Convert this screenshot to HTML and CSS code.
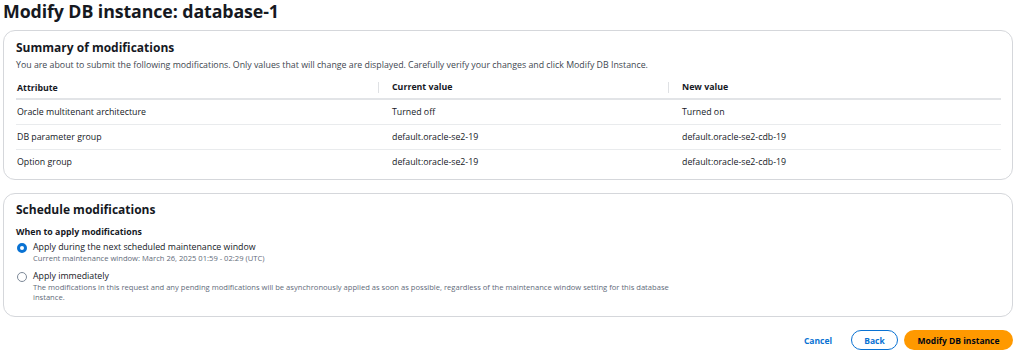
FILE: index.html
```html
<!DOCTYPE html>
<html lang="en">
<head>
    <meta charset="UTF-8">
    <meta name="viewport" content="width=device-width, initial-scale=1.0">
    <title>Modify DB instance</title>
    <link rel="stylesheet" href="styles.css">
</head>
<body>
    <div class="page">
        <h1>Modify DB instance: database-1</h1>

        <div class="card">
            <h2>Summary of modifications</h2>
            <p class="desc">You are about to submit the following modifications. Only values that will change are displayed. Carefully verify your changes and click Modify DB Instance.</p>

            <table class="summary">
                <thead>
                    <tr>
                        <th class="col-attr">Attribute</th>
                        <th class="col-cur"><span>Current value</span></th>
                        <th class="col-new"><span>New value</span></th>
                    </tr>
                </thead>
                <tbody>
                    <tr>
                        <td>Oracle multitenant architecture</td>
                        <td>Turned off</td>
                        <td>Turned on</td>
                    </tr>
                    <tr>
                        <td>DB parameter group</td>
                        <td>default.oracle-se2-19</td>
                        <td>default.oracle-se2-cdb-19</td>
                    </tr>
                    <tr>
                        <td>Option group</td>
                        <td>default:oracle-se2-19</td>
                        <td>default:oracle-se2-cdb-19</td>
                    </tr>
                </tbody>
            </table>
        </div>

        <div class="card schedule">
            <h2>Schedule modifications</h2>
            <div class="field-label">When to apply modifications</div>

            <div class="radio-item">
                <span class="radio checked"></span>
                <div class="radio-text">
                    <div class="radio-label">Apply during the next scheduled maintenance window</div>
                    <div class="radio-desc">Current maintenance window: March 26, 2025 01:59 - 02:29 (UTC)</div>
                </div>
            </div>

            <div class="radio-item">
                <span class="radio"></span>
                <div class="radio-text">
                    <div class="radio-label">Apply immediately</div>
                    <div class="radio-desc">The modifications in this request and any pending modifications will be asynchronously applied as soon as possible, regardless of the maintenance window setting for this database instance.</div>
                </div>
            </div>
        </div>

        <div class="actions">
            <button class="btn-link">Cancel</button>
            <button class="btn-normal">Back</button>
            <button class="btn-primary">Modify DB instance</button>
        </div>
    </div>
</body>
</html>
```

FILE: styles.css
```css
body {
    margin: 0;
    padding: 0;
    background-color: #ffffff;
    font-family: "Open Sans", "Noto Sans", sans-serif;
    color: #16191f;
}

.page {
    width: 1010px;
    padding: 0 3px;
}

h1 {
    font-size: 17.8px;
    font-weight: 700;
    line-height: 22px;
    margin: 0;
    height: 30px;
    letter-spacing: -0.1px;
}

.card {
    border: 1px solid #d5d7db;
    border-radius: 12px;
    padding: 8px 12px 5px 12px;
    margin-bottom: 13px;
}

h2 {
    font-size: 12px;
    font-weight: 700;
    line-height: 18px;
    margin: 0;
}

.desc {
    font-size: 8.8px;
    line-height: 12px;
    margin: 2px 0 0 0;
    color: #414750;
}

.summary {
    width: 985px;
    border-collapse: collapse;
    margin-top: 6px;
    font-size: 8.8px;
}

.summary th {
    text-align: left;
    font-weight: 700;
    height: 21px;
    padding: 0;
    border-bottom: 2px solid #e2e4e7;
}

.summary th span {
    display: block;
    border-left: 1px solid #dfe1e4;
    padding-left: 13px;
    line-height: 11px;
}

.summary .col-attr {
    width: 361px;
    padding-left: 1px;
}

.summary .col-cur {
    width: 290px;
}

.summary td {
    height: 24px;
    padding: 0 0 0 14px;
    border-bottom: 1px solid #e9ebed;
}

.summary td:first-child {
    padding-left: 1px;
}

.summary tbody tr:last-child td {
    border-bottom: none;
}

.schedule {
    padding: 7px 12px 14px 12px;
}

.field-label {
    font-size: 8.8px;
    font-weight: 700;
    line-height: 12px;
    margin-top: 7px;
}

.radio-item {
    display: flex;
    align-items: flex-start;
    gap: 6px;
    margin-top: 3px;
    padding-left: 1px;
}

.radio-item + .radio-item {
    margin-top: 7px;
}

.radio {
    width: 8px;
    height: 8px;
    border: 1px solid #7d8998;
    border-radius: 50%;
    margin-top: 2px;
    flex-shrink: 0;
    background: #ffffff;
}

.radio.checked {
    width: 4px;
    height: 4px;
    border: 3px solid #0972d3;
}

.radio-label {
    font-size: 8.8px;
    line-height: 12px;
}

.radio-desc {
    font-size: 7.6px;
    line-height: 10px;
    color: #5f6b7a;
    width: 645px;
}

.actions {
    display: flex;
    justify-content: flex-end;
    align-items: center;
    gap: 6px;
}

button {
    font-family: "Open Sans", "Noto Sans", sans-serif;
    font-size: 8.5px;
    font-weight: 700;
    height: 20px;
    border-radius: 12px;
    cursor: pointer;
}

.btn-link {
    background: none;
    border: none;
    color: #0972d3;
    padding: 0 10px;
    margin-right: 3px;
}

.btn-normal {
    background: #ffffff;
    border: 1px solid #0972d3;
    color: #0972d3;
    width: 47px;
}

.btn-primary {
    background: #ff9900;
    border: none;
    color: #000716;
    width: 109px;
}
```
